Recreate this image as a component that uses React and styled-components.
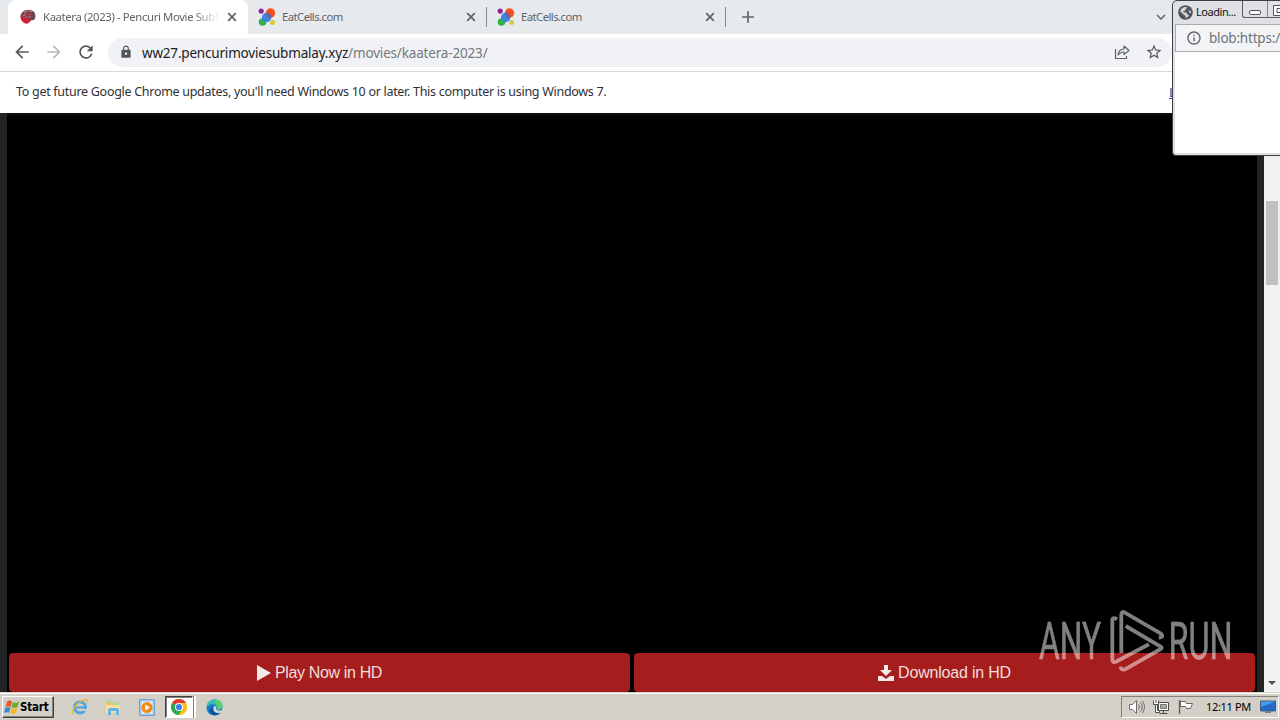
import styled, { createGlobalStyle } from 'styled-components'
import {
  MdAdd,
  MdArrowBack,
  MdArrowForward,
  MdInfoOutline,
  MdKeyboardArrowDown,
  MdLock,
  MdRefresh,
  MdStarBorder
} from 'react-icons/md'

const GlobalStyle = createGlobalStyle`
  * {
    box-sizing: border-box;
  }

  body {
    margin: 0;
    overflow: hidden;
    font-family: 'Noto Sans', sans-serif;
  }

  svg {
    display: block;
    flex: none;
  }
`

const Screen = styled.main`
  position: relative;
  display: flex;
  flex-direction: column;
  width: 1280px;
  height: 720px;
  overflow: hidden;
  background: #fff;
`

const Text = styled.span`
  font-family: ${p => p.$family || "'Noto Sans', sans-serif"};
  font-size: ${p => p.$size || 12}px;
  font-weight: ${p => p.$weight || 400};
  letter-spacing: ${p => p.$spacing || 0}px;
  color: ${p => p.$color || '#5f6368'};
  line-height: 18px;
  white-space: pre;
`

/* tab strip */

const TabStrip = styled.header`
  display: flex;
  align-items: center;
  height: 34px;
  padding-left: 8px;
  background: #e7eaed;
  color: #5f6368;
`

const Tab = styled.div`
  display: flex;
  align-items: center;
  width: ${p => p.$width}px;
  height: 34px;
  padding-left: ${p => (p.$active ? 12 : 10)}px;
  padding-right: ${p => (p.$active ? 9 : 8)}px;
  border-radius: 8px 8px 0 0;
  background: ${p => (p.$active ? '#fff' : 'transparent')};
`

const TabTitle = styled.div`
  flex: 1;
  min-width: 0;
  margin: 0 3px 0 ${p => (p.$fade ? 7 : 6)}px;
  height: 18px;
  display: flex;
  overflow: hidden;
  ${p =>
    p.$fade &&
    'mask-image: linear-gradient(to right, #000 150px, transparent 176px);'}
`

const Divider = styled.i`
  width: 1px;
  height: 20px;
  background: #868b90;
`

const NewTab = styled.div`
  margin-left: 12px;
  flex: 1;
`

const TabSearch = styled.div`
  margin-right: 110px;
`

/* toolbar */

const Toolbar = styled.nav`
  display: flex;
  align-items: center;
  height: 38px;
  padding: 0 0 1px 12px;
  border-bottom: 1px solid #d5d8db;
  color: #54585d;
`

const NavButton = styled.div`
  width: 32px;
  color: ${p => (p.$disabled ? '#b9bbbe' : 'inherit')};
`

const AddressBar = styled.div`
  display: flex;
  align-items: center;
  width: 1064px;
  height: 29px;
  padding: 0 9px 0 11px;
  border-radius: 15px;
  background: #f0f2f5;
`

const Url = styled.div`
  flex: 1;
  margin-left: 9px;
  padding-top: 2px;
  display: flex;
`

const StarButton = styled.div`
  margin-left: 15px;
`

const InfoBar = styled.div`
  display: flex;
  align-items: center;
  justify-content: space-between;
  height: 41px;
  padding: 0 47px 1px 16px;
`

const InfoLink = styled.a`
  width: 64px;
  font: 13px 'Noto Sans', sans-serif;
  color: #1558c0;
  text-decoration: underline;
  white-space: pre;
`

/* page */

const Page = styled.section`
  display: flex;
  height: 579px;
`

const Content = styled.div`
  width: 1264px;
  padding: 0 2px;
  display: flex;
  align-items: flex-end;
  gap: 4px;
  background: #000;
  border: solid #222;
  border-width: 0 7px;
  box-shadow: inset 0 4px 3px -2px #121414;
`

const Action = styled.button`
  display: flex;
  align-items: center;
  justify-content: center;
  gap: 4px;
  flex: 1;
  height: 39px;
  padding: 0;
  border: 0;
  border-radius: 4px;
  background: #a51d1d;
  color: #f4e9e9;
`

const Scrollbar = styled.aside`
  display: flex;
  flex-direction: column;
  justify-content: space-between;
  align-items: center;
  width: 16px;
  padding: 88px 0 7px;
  background: #f1f1f1;
`

const Thumb = styled.div`
  width: 12px;
  height: 84px;
  background: #c1c1c1;
`

const Watermark = styled.svg`
  position: absolute;
  left: 1030px;
  top: 604px;
`

/* popup window */

const Popup = styled.div`
  position: absolute;
  left: 1172px;
  top: 0;
  width: 130px;
  height: 156px;
  padding: 0 3px 3px 2px;
  background: #dfe1e6;
  border: 1px solid #3c3f43;
  border-radius: 5px 0 0 4px;
`

const PopupTitle = styled.div`
  display: flex;
  align-items: center;
  height: 23px;
  padding-left: 3px;
`

const PopupName = styled.div`
  width: 46px;
  margin: 0 0 0 3px;
  padding-bottom: 1px;
  display: flex;
`

const Caption = styled.div`
  display: flex;
  align-self: flex-start;
  height: 17px;
  border: solid #5a5c60;
  border-width: 0 0 1px 1px;
  border-radius: 0 0 0 3px;
`

const CaptionButton = styled.div`
  display: flex;
  align-items: center;
  justify-content: center;
  width: 25px;
  padding-top: ${p => p.$drop || 0}px;
  border-right: 1px solid #85878b;
`

const PopupAddress = styled.div`
  display: flex;
  align-items: center;
  gap: 7px;
  height: 28px;
  padding-left: 10px;
  background: #f3f4f5;
  border: solid #a9abad;
  border-width: 1px 0 1px 1px;
  color: #5f6368;
`

const PopupBody = styled.div`
  height: 101px;
  background: #fff;
`

/* taskbar */

const Taskbar = styled.footer`
  display: flex;
  align-items: center;
  height: 28px;
  padding: 1px 1px 0 2px;
  background: #d4d0c8;
  border-top: 1px solid #d4d0c8;
  box-shadow: inset 0 1px #fff;
`

const StartButton = styled.div`
  display: flex;
  align-items: center;
  width: 52px;
  height: 22px;
  padding-left: 1px;
  border: 1px solid;
  border-color: #fff #404040 #404040 #fff;
  box-shadow: inset -1px -1px #808080;
`

const Launchers = styled.div`
  display: flex;
  align-items: center;
  flex: 1;
  margin-left: 17px;
`

const Launcher = styled.div`
  width: ${p => p.$width || 34}px;
  display: flex;
`

const RunningApp = styled.div`
  display: flex;
  align-items: center;
  justify-content: center;
  width: 28px;
  height: 22px;
  margin: 0 13px 0 -8px;
  background: #fff;
  border: 1px solid;
  border-color: #404040 #fff #fff #404040;
  box-shadow: inset 1px 1px #808080, 1px 0 #808080, 3px 0 #fff;
`

const Tray = styled.div`
  display: flex;
  align-items: center;
  width: 158px;
  height: 22px;
  padding-left: 6px;
  border: 1px solid;
  border-color: #808080 #fff #fff #808080;
`

const Clock = styled.div`
  display: flex;
  width: 45px;
  margin: 0 9px 0 12px;
`

const CloseIcon = () => (
  <svg width="14" height="14" viewBox="0 0 14 14">
    <path d="M3.200 3.200l7.600 7.600M10.800 3.200l-7.600 7.600" stroke="currentColor" strokeWidth="1.700" />
  </svg>
)

const CellsIcon = () => (
  <svg width="18" height="18" viewBox="0 0 18 18">
    <circle cx="3.2" cy="3.1" r="2.6" fill="#8e2499" />
    <circle cx="12.5" cy="5" r="4.7" fill="#f4511e" />
    <circle cx="4.5" cy="14" r="3.8" fill="#2fb344" />
    <circle cx="14.6" cy="14.6" r="2.5" fill="#d6cb3c" />
    <circle cx="8.6" cy="9.5" r="4.7" fill="#3d85e0" />
    <path d="M8 5c4-1 6 2 5 5-3 0-5-2-5-5z" fill="#765f91" />
  </svg>
)

const MovieIcon = () => (
  <svg width="16" height="16" viewBox="0 0 16 16">
    <path d="M1 5C3 1 9-.5 13 2c3 2 3 7 1 9l-4 .5C9 14 7 15 5 14 1 12 0 9 1 5z" fill="#6a4650" />
    <path d="M1 5c2 1 2 4 5 4l5 2c-1 3-5 5-8 2C1 11 0 9 1 5z" fill="#d31f36" />
    <path d="M4 4c2-2 6-3 8-1M3 7l3-2m2 0 3 1m-6 2h6" stroke="#c67983" strokeWidth="1.2" fill="none" />
    <path d="M7 3l5 5m-6-3 3 5" stroke="#b5283c" fill="none" />
  </svg>
)

const ShareIcon = () => (
  <svg width="16" height="16" viewBox="0 0 16 16" fill="none" stroke="#5f6368" strokeWidth="1.2">
    <path d="M1.5 5v9.5h11V12" />
    <path d="M4 11c.3-4 2.6-5.800 6-6V2l5 4.500-5 4V8C7.400 8 5.500 9 4 11z" strokeLinejoin="round" />
  </svg>
)

const GlobeIcon = () => (
  <svg width="15" height="15" viewBox="0 0 15 15">
    <circle cx="7.500" cy="7.500" r="7.300" fill="#505459" />
    <path d="M7 2c2 0 2.500.3 2 1L7.500 4.500 7 6H5l1 1.500h2.500l1 2 1.500.5-1 2-2.500 1V11L5.500 9.500 2.200 6.500C2.800 4 4.500 2.200 7 2z" fill="#d3d5da" />
    <path d="M11.500 5 12.800 6.200v2L11.500 8 10.800 6.200z" fill="#d3d5da" />
  </svg>
)

const StartFlag = () => (
  <svg width="16" height="16" viewBox="0 0 16 16">
    <path d="M3 2.500c2-1.500 4-1 5 0L6.500 8C5 7 3 7 1.500 8z" fill="#e9562a" />
    <path d="M8.700 3c2 1 4 1 6.500-.5l-1.500 5.500c-2 1.500-4 1-6.300.3z" fill="#6cae35" />
    <path d="M1.300 8.700c1.700-1 3.500-1 5 0L5 14c-1.500-1-3.500-1-5 0z" fill="#378bd0" />
    <path d="M7.200 9c2 1 4 1 6-.3L12 14c-2 1.300-4 1.300-6 .2z" fill="#f4bd2f" />
  </svg>
)

const ExplorerIcon = () => (
  <svg width="18" height="18" viewBox="0 0 18 18">
    <circle cx="9" cy="9.500" r="5.500" fill="none" stroke="#4ba6de" strokeWidth="3" />
    <path d="M4 9.500h11" stroke="#4ba6de" strokeWidth="2.200" />
    <path d="M12 11h5v2h-5z" fill="#d4d0c8" />
    <path d="M2 16C-1 12 9 2 15 1.500c2 0 2 2 1 4" stroke="#e7b93c" strokeWidth="1.400" fill="none" />
  </svg>
)

const FolderIcon = () => (
  <svg width="17" height="18" viewBox="0 0 17 18">
    <path d="M1 3h5l1 2h8v9H1z" fill="#e7c568" />
    <path d="M3 2h5v3H3zM8 4h6v4H8z" fill="#b9d8a0" />
    <path d="M1 7h14v8H1z" fill="#f5dfa0" />
    <path d="M3 17v-5q0-2 2-2h7q2 0 2 2v5h-3v-4H6v4z" fill="#66b4e3" />
  </svg>
)

const MediaIcon = () => (
  <svg width="16" height="17" viewBox="0 0 16 17">
    <path d="M.7.7h14.600v15.600H.7z" fill="#b9daf0" stroke="#5590c0" />
    <path d="M3 3h10v11H3z" fill="#e3f0f8" />
    <circle cx="8" cy="8.500" r="5.500" fill="#f18a1b" />
    <path d="M6.300 5.500v6l4.700-3z" fill="#fff" />
  </svg>
)

const ChromeIcon = () => (
  <svg width="16" height="16" viewBox="0 0 16 16">
    <circle cx="8" cy="8" r="8" fill="#fbc116" />
    <path d="M8 8 1.070 4A8 8 0 0 1 14.930 4z" fill="#e33b2e" />
    <path d="M1.070 4A8 8 0 0 0 8 16l3.460-6L8 8z" fill="#2da94f" />
    <path d="M8 4h6.930A8 8 0 0 1 8 16l3.460-6z" fill="#fbc116" />
    <circle cx="8" cy="8" r="4" fill="#fff" />
    <circle cx="8" cy="8" r="3.100" fill="#3f7fe8" />
  </svg>
)

const EdgeIcon = () => (
  <svg width="17" height="17" viewBox="0 0 17 17">
    <circle cx="8.500" cy="8.500" r="8" fill="#1878c9" />
    <path d="M.5 8C1 3 5 .5 9 .5c5 0 8 3.500 7.500 7C16 10 13.500 11 11 10.500 12 7 9 5 6 5.200 3.500 5.400 1.500 6.500.5 8z" fill="#36bfb1" />
    <path d="M9 .5c5 0 8 3.500 7.500 7C16 10 13.500 11 11 10.500c1-2 .5-3.500-.5-4.500z" fill="#5bcf68" />
    <path d="M6.500 8c-1 4 3 7.500 7 6-3 3.500-8 2.500-9.500-1C3 11 4 9 6.500 8z" fill="#0b4fa0" />
    <path d="M8 7.500c2-.7 3 1 2 2.500 1 2 4 2 6 1l.5 1.500c-2 2-5.500 2-7.500.5C7.500 12 7 9.500 8 7.500z" fill="#d4dcd8" />
  </svg>
)

const SpeakerIcon = () => (
  <svg width="18" height="16" viewBox="0 0 18 16" fill="none" stroke="#6d6d6d">
    <path d="M1.500 5.500h3l4-4v13l-4-4h-3z" fill="#fff" />
    <path d="M10.500 5.500q2 2.500 0 5M12.500 3.500q3.500 4.500 0 9M14.500 2q4 6 0 12" />
  </svg>
)

const NetworkIcon = () => (
  <svg width="17" height="16" viewBox="0 0 17 16" stroke="#4e4e4e">
    <path d="M5.500 3.500h10v8h-10z" fill="#fff" />
    <path d="M7.500 5.500h6v4h-6z" fill="#a9aaa9" stroke="#777" />
    <path d="M6.500 14.500h8M10.500 12v2" />
    <path d="M.5 1.500v4h5v-4M2.500 5.500v8h4v-2h-2v-6M3 1v3" fill="#fff" />
  </svg>
)

const FlagIcon = () => (
  <svg width="17" height="16" viewBox="0 0 17 16" stroke="#656565" fill="#fff">
    <path d="M2.500 1v14" strokeWidth="1.500" />
    <path d="M3.500 2.500h5l1 2h6l-2 5h-4l-1-2h-5z" />
  </svg>
)

const DesktopIcon = () => (
  <svg width="16" height="14" viewBox="0 0 16 14">
    <path d="M.5 1h15v10H.5z" fill="#2469c7" stroke="#416080" />
    <path d="M1 1.500h14L1 7z" fill="#4a9bec" />
    <path d="M5 11h6v2H5z" fill="#74818d" />
  </svg>
)

const AnyRun = () => (
  <Watermark width="210" height="76" viewBox="0 0 210 76" opacity=".5">
    <g fill="#fff" stroke="#fff" strokeWidth=".6" fontFamily="Roboto, sans-serif" fontSize="52">
      <text x="9" y="55" textLength="62" lengthAdjust="spacingAndGlyphs">ANY</text>
      <text x="138.500" y="55" textLength="64" lengthAdjust="spacingAndGlyphs">RUN</text>
    </g>
    <path
      d="M87 15.300Q82.300 12.500 82.300 17v37.500q0 5.500 4.500 2.800L119 40.300M91.300 49V11q0-4.500 4-2.200l36 21q2.500 3.700-2.500 3.700M95.700 22l35 20.700q2 1.300 0 2.300L95 65.300q-4.500 1-4.200-2.600"
      fill="none"
      stroke="#fff"
      strokeWidth="3.800"
      strokeLinejoin="round"
    />
  </Watermark>
)

const tabs = [
  { title: 'Kaatera (2023) - Pencuri Movie SubMalay', icon: MovieIcon, active: true, width: 240, spacing: -0.36 },
  { title: 'EatCells.com', icon: CellsIcon, width: 238, spacing: -0.55 },
  { title: 'EatCells.com', icon: CellsIcon, width: 238, spacing: -0.55 }
]

export default function App() {
  return (
    <Screen>
      <GlobalStyle />
      <TabStrip>
        {tabs.map(({ title, icon: Icon, active, width, spacing }, i) => [
          <Tab key={i} $active={active} $width={width}>
            <Icon />
            <TabTitle $fade={active}>
              <Text $size={11.3} $spacing={spacing}>{title}</Text>
            </TabTitle>
            <CloseIcon />
          </Tab>,
          !active && <Divider key={`d${i}`} />
        ])}
        <NewTab>
          <MdAdd size={20} />
        </NewTab>
        <TabSearch>
          <MdKeyboardArrowDown size={18} />
        </TabSearch>
      </TabStrip>

      <Toolbar>
        <NavButton>
          <MdArrowBack size={20} />
        </NavButton>
        <NavButton $disabled>
          <MdArrowForward size={20} />
        </NavButton>
        <NavButton>
          <MdRefresh size={20} />
        </NavButton>
        <AddressBar>
          <MdLock size={14} />
          <Url>
            <Text $size={13.5} $spacing={-0.19} $color="#202124">ww27.pencurimoviesubmalay.xyz</Text>
            <Text $size={13.5} $spacing={-0.17} $color="#75797e">/movies/kaatera-2023/</Text>
          </Url>
          <ShareIcon />
          <StarButton>
            <MdStarBorder size={18} />
          </StarButton>
        </AddressBar>
      </Toolbar>

      <InfoBar>
        <Text $size={12.5} $spacing={-0.29} $color="#303134">
          To get future Google Chrome updates, you'll need Windows 10 or later. This computer is using Windows 7.
        </Text>
        <InfoLink>Learn more</InfoLink>
      </InfoBar>

      <Page>
        <Content>
          <Action>
            <svg width="14" height="16" viewBox="0 0 14 16">
              <path d="M0 0v16l14-8z" fill="currentColor" />
            </svg>
            <Text $family="'Liberation Sans', sans-serif" $size={16} $spacing={-0.35} $color="#f2dcdc">Play Now in HD</Text>
          </Action>
          <Action>
            <svg width="16" height="16" viewBox="0 0 16 16">
              <path d="M6 0h4v5h4L8 11 2 5h4zM0 11h4l4 3 4-3h4v5H0z" fill="currentColor" />
            </svg>
            <Text $family="'Liberation Sans', sans-serif" $size={16} $spacing={-0.2} $color="#f2dcdc">Download in HD</Text>
          </Action>
        </Content>
        <Scrollbar>
          <Thumb />
          <svg width="8" height="4" viewBox="0 0 8 4">
            <path d="M0 0h8L4 4z" fill="#505050" />
          </svg>
        </Scrollbar>
      </Page>

      <Taskbar>
        <StartButton>
          <StartFlag />
          <Text $family="'DejaVu Sans Condensed', 'DejaVu Sans', sans-serif" $weight={700} $size={11.5} $spacing={-0.2} $color="#000">Start</Text>
        </StartButton>
        <Launchers>
          <Launcher>
            <ExplorerIcon />
          </Launcher>
          <Launcher>
            <FolderIcon />
          </Launcher>
          <Launcher>
            <MediaIcon />
          </Launcher>
          <RunningApp>
            <ChromeIcon />
          </RunningApp>
          <EdgeIcon />
        </Launchers>
        <Tray>
          <Launcher $width={25}>
            <SpeakerIcon />
          </Launcher>
          <Launcher $width={24}>
            <NetworkIcon />
          </Launcher>
          <FlagIcon />
          <Clock>
            <Text $size={11} $spacing={-0.35} $color="#000">12:11 PM</Text>
          </Clock>
          <DesktopIcon />
        </Tray>
      </Taskbar>

      <AnyRun />

      <Popup>
        <PopupTitle>
          <GlobeIcon />
          <PopupName>
            <Text $size={11} $spacing={-0.45} $color="#111">Loadin...</Text>
          </PopupName>
          <Caption>
            <CaptionButton $drop={6}>
              <svg width="12" height="5" viewBox="0 0 12 5">
                <rect x=".5" y=".5" width="11" height="4" rx="1.500" fill="#fff" stroke="#505357" />
              </svg>
            </CaptionButton>
            <CaptionButton $drop={2}>
              <svg width="14" height="11" viewBox="0 0 14 11">
                <path d="M.5.5h13v10H.5zM4 3.500h6v4H4z" fill="#fff" stroke="#505357" />
              </svg>
            </CaptionButton>
          </Caption>
        </PopupTitle>
        <PopupAddress>
          <MdInfoOutline size={16} />
          <Text $size={13.5} $spacing={-0.2} $color="#6f7378">blob:https://</Text>
        </PopupAddress>
        <PopupBody />
      </Popup>
    </Screen>
  )
}
